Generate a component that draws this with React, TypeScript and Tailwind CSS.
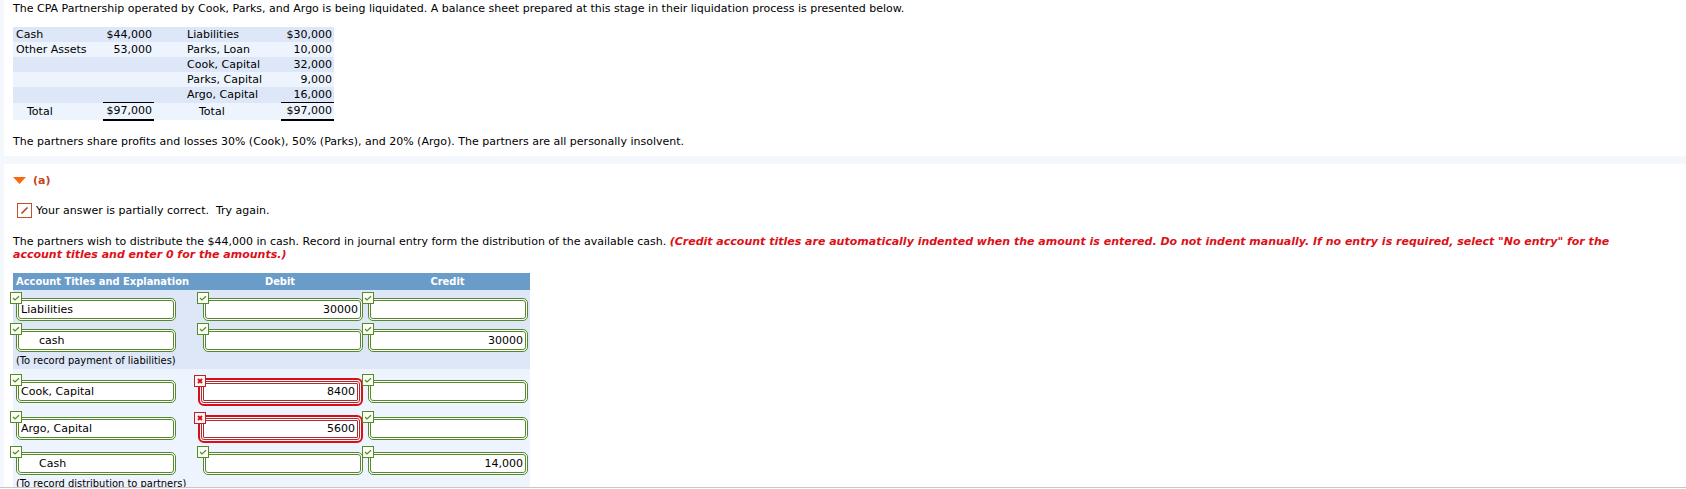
import { clsx } from "clsx";

type BalanceRow = {
  asset: string;
  assetAmount: string;
  claim: string;
  claimAmount: string;
};

type Field = {
  value: string;
  correct: boolean;
};

type EntryRow = {
  account: string;
  indented?: boolean;
  debit: Field;
  credit: Field;
};

type JournalEntry = {
  rows: EntryRow[];
  explanation: string;
  band: string;
  rowPadding: string;
};

const balanceRows: BalanceRow[] = [
  { asset: "Cash", assetAmount: "$44,000", claim: "Liabilities", claimAmount: "$30,000" },
  { asset: "Other Assets", assetAmount: "53,000", claim: "Parks, Loan", claimAmount: "10,000" },
  { asset: "", assetAmount: "", claim: "Cook, Capital", claimAmount: "32,000" },
  { asset: "", assetAmount: "", claim: "Parks, Capital", claimAmount: "9,000" },
  { asset: "", assetAmount: "", claim: "Argo, Capital", claimAmount: "16,000" },
];

const entries: JournalEntry[] = [
  {
    explanation: "(To record payment of liabilities)",
    band: "bg-[#dde7f7]",
    rowPadding: "pt-2",
    rows: [
      {
        account: "Liabilities",
        debit: { value: "30000", correct: true },
        credit: { value: "", correct: true },
      },
      {
        account: "cash",
        indented: true,
        debit: { value: "", correct: true },
        credit: { value: "30000", correct: true },
      },
    ],
  },
  {
    explanation: "(To record distribution to partners)",
    band: "bg-[#edf4fe]",
    rowPadding: "pt-[9px]",
    rows: [
      {
        account: "Cook, Capital",
        debit: { value: "8400", correct: false },
        credit: { value: "", correct: true },
      },
      {
        account: "Argo, Capital",
        debit: { value: "5600", correct: false },
        credit: { value: "", correct: true },
      },
      {
        account: "Cash",
        indented: true,
        debit: { value: "", correct: true },
        credit: { value: "14,000", correct: true },
      },
    ],
  },
];

function Mark({ correct }: { correct: boolean }) {
  return (
    <svg
      className={clsx(
        "absolute -left-1.5 size-3",
        correct ? "-top-1.5" : "-top-[5px]",
      )}
      viewBox="0 0 12 12"
      fill="none"
      aria-hidden="true"
    >
      <rect
        x="0.5"
        y="0.5"
        width="11"
        height="11"
        fill={correct ? "#fbfff4" : "#fff4f4"}
        stroke={correct ? "#55892b" : "#b5242c"}
      />
      {correct ? (
        <path d="M3 6l2 2 4-3.7" stroke="#55892b" strokeWidth="1.2" />
      ) : (
        <path d="M4 4l4 4M8 4l-4 4" stroke="#d01018" strokeWidth="1.8" />
      )}
    </svg>
  );
}

type AnswerBoxProps = {
  label: string;
  field: Field;
  align?: "left" | "right";
  indented?: boolean;
};

function AnswerBox({ label, field, align = "right", indented }: AnswerBoxProps) {
  const { value, correct } = field;

  return (
    <div
      className={clsx(
        "relative",
        correct
          ? "w-40"
          : "w-[165px] rounded-md border-2 border-[#d80f16] bg-[#fdf0f0] p-px",
      )}
    >
      <input
        type="text"
        aria-label={label}
        aria-invalid={!correct}
        defaultValue={value}
        className={clsx(
          "block w-full border-3 border-double bg-white pr-0.5 text-black outline-none",
          correct
            ? "h-[23px] rounded-[5px] border-[#55892b]"
            : "h-[22px] rounded-[3px] border-[#b02a32]",
          align === "right" ? "text-right" : "text-left",
          indented ? "pl-5" : "pl-0.5",
        )}
      />
      <Mark correct={correct} />
    </div>
  );
}

function BalanceSheet() {
  return (
    <table className="mt-3 w-[321px] table-fixed border-collapse leading-[15px]">
      <colgroup>
        <col className="w-[90px]" />
        <col className="w-[51px]" />
        <col className="w-[17px]" />
        <col className="w-[110px]" />
        <col className="w-[53px]" />
      </colgroup>
      <tbody>
        {balanceRows.map((row) => (
          <tr key={row.claim} className="h-[15px] odd:bg-[#dde7f7] even:bg-[#edf4fe]">
            <td className="whitespace-nowrap p-0 pl-[3px]">{row.asset}</td>
            <td className="p-0 pr-0.5 text-right">{row.assetAmount}</td>
            <td className="p-0" />
            <td className="whitespace-nowrap p-0 pl-4">{row.claim}</td>
            <td className="p-0 pr-0.5 text-right">{row.claimAmount}</td>
          </tr>
        ))}
        <tr className="h-[17px] bg-[#edf4fe]">
          <td className="p-0 pl-3.5">Total</td>
          <td className="border-b-2 border-t border-black p-0 pr-0.5 text-right">
            $97,000
          </td>
          <td className="p-0" />
          <td className="p-0 pl-7">Total</td>
          <td className="border-b-2 border-t border-black p-0 pr-0.5 text-right">
            $97,000
          </td>
        </tr>
      </tbody>
    </table>
  );
}

function JournalTable() {
  return (
    <table className="mt-3 w-[517px] table-fixed border-collapse">
      <colgroup>
        <col className="w-[182px]" />
        <col className="w-[170px]" />
        <col className="w-[165px]" />
      </colgroup>
      <thead className="whitespace-nowrap bg-[#6a9cc9] font-['DejaVu_Sans_Condensed','DejaVu_Sans',sans-serif] leading-[17px] text-white">
        <tr>
          <th className="p-0 pl-[3px] text-left">Account Titles and Explanation</th>
          <th className="p-0">Debit</th>
          <th className="p-0">Credit</th>
        </tr>
      </thead>
      {entries.map((entry) => (
        <tbody key={entry.explanation} className={entry.band}>
          {entry.rows.map((row) => (
            <tr key={row.account}>
              <td className={clsx("p-0 pl-[3px]", entry.rowPadding)}>
                <AnswerBox
                  label="Account title"
                  field={{ value: row.account, correct: true }}
                  align="left"
                  indented={row.indented}
                />
              </td>
              <td className={clsx("p-0 pr-0.5", entry.rowPadding)}>
                <div className="flex justify-end">
                  <AnswerBox label={`${row.account} debit`} field={row.debit} />
                </div>
              </td>
              <td className={clsx("p-0 pl-[3px]", entry.rowPadding)}>
                <AnswerBox label={`${row.account} credit`} field={row.credit} />
              </td>
            </tr>
          ))}
          <tr>
            <td
              colSpan={3}
              className="p-0 pl-[3px] font-['DejaVu_Sans_Condensed','DejaVu_Sans',sans-serif] leading-[17px]"
            >
              {entry.explanation}
            </td>
          </tr>
        </tbody>
      ))}
    </table>
  );
}

function App() {
  return (
    <div className="flex h-screen flex-col bg-white pb-px font-['DejaVu_Sans',Verdana,sans-serif] text-[11px] leading-[13px] text-black">
      <main className="min-h-0 flex-1 overflow-hidden border-b border-[#c8c8c8]">
        <div className="border-l-4 border-[#f4f7fc]">
          <section className="border-b-8 border-[#f4f7fc] px-[9px] pb-2 pt-0.5">
            <p>
              The CPA Partnership operated by Cook, Parks, and Argo is being liquidated. A
              balance sheet prepared at this stage in their liquidation process is presented
              below.
            </p>
            <BalanceSheet />
            <p className="mt-3.5">
              The partners share profits and losses 30% (Cook), 50% (Parks), and 20% (Argo).
              The partners are all personally insolvent.
            </p>
          </section>

          <section className="px-[9px] pt-2.5">
            <h2 className="font-bold text-[#c0441c]">
              <button type="button" className="flex items-center gap-[7px]">
                <svg className="h-[7px] w-[13px]" viewBox="0 0 13 7" aria-hidden="true">
                  <path d="M0 0h13L6.5 7z" fill="#f96a10" />
                </svg>
                (a)
              </button>
            </h2>

            <div className="mt-4 flex items-center gap-1 pl-1">
              <svg className="size-[15px]" viewBox="0 0 15 15" fill="none" aria-hidden="true">
                <rect x="0.5" y="0.5" width="14" height="14" stroke="#c0522a" />
                <path d="M4.5 10.5l6-6" stroke="#b5431c" strokeWidth="1.6" />
              </svg>
              <p>Your answer is partially correct.&nbsp; Try again.</p>
            </div>

            <p className="mt-[17px] pr-7">
              The partners wish to distribute the $44,000 in cash. Record in journal entry form
              the distribution of the available cash.{" "}
              <strong className="font-bold italic text-[#dc1018]">
                (Credit account titles are automatically indented when the amount is entered.
                Do not indent manually. If no entry is required, select "No entry" for the
                account titles and enter 0 for the amounts.)
              </strong>
            </p>
            <JournalTable />
          </section>
        </div>
      </main>
    </div>
  );
}

export default App;
